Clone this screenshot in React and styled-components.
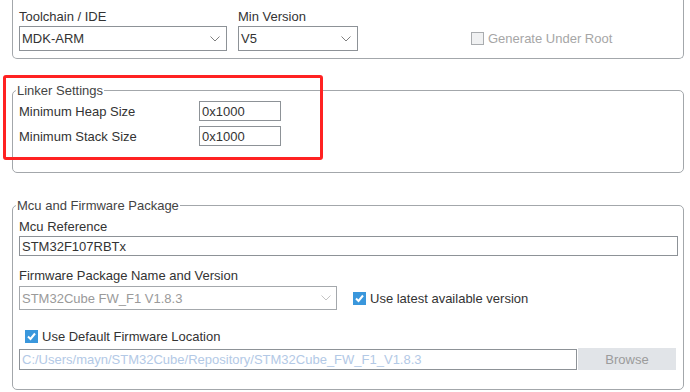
import React from "react";
import styled, { createGlobalStyle } from "styled-components";

const Global = createGlobalStyle`
  html, body { margin: 0; padding: 0; background: #ffffff; }
  body {
    font-family: "Liberation Sans", Arial, sans-serif;
    font-size: 13px;
    color: #333333;
  }
  * { box-sizing: border-box; }
`;

const Page = styled.div`
  width: 690px;
  height: 392px;
  overflow: hidden;
  padding: 0 6px 0 12px;
`;

const TopPanel = styled.div`
  border: 1px solid #a3a7ab;
  border-top: none;
  border-radius: 0 0 5px 5px;
  padding: 9px 6px 7px;
  display: flex;
  align-items: flex-end;
  gap: 11px;
`;

const Field = styled.div`
  display: flex;
  flex-direction: column;
  gap: 2px;
  width: ${(p) => p.$w}px;
`;

const Label = styled.div`
  line-height: 15px;
  color: ${(p) => (p.$muted ? "#a6a6a6" : "#333333")};
  white-space: nowrap;
`;

const Select = styled.div`
  height: ${(p) => p.$h || 25}px;
  width: ${(p) => (p.$w ? `${p.$w}px` : "100%")};
  border: 1px solid ${(p) => (p.$disabled ? "#a4a8ac" : "#8d9297")};
  display: flex;
  align-items: center;
  justify-content: space-between;
  padding: 0 ${(p) => (p.$disabled ? 5 : 6)}px 0 2px;
  color: ${(p) => (p.$disabled ? "#9a9a9a" : "#333333")};
  background: #fff;
  white-space: nowrap;
`;

const CheckItem = styled.label`
  display: flex;
  align-items: center;
  gap: ${(p) => p.$gap ?? 5}px;
  height: ${(p) => p.$h || 15}px;
  margin-left: ${(p) => p.$ml || 0}px;
  color: ${(p) => (p.$muted ? "#a6a6a6" : "#333333")};
  white-space: nowrap;
  line-height: 15px;
`;

const Box = styled.span`
  width: 13px;
  height: 13px;
  flex: none;
  display: inline-flex;
  align-items: center;
  justify-content: center;
  border: 1px solid ${(p) => (p.$checked ? "#3a97dc" : "#a9acaf")};
  background: ${(p) => (p.$checked ? "#3a97dc" : "#f0f1f2")};
`;

const Group = styled.fieldset`
  margin: ${(p) => p.$mt}px 0 0;
  border: 1px solid #a3a7ab;
  border-radius: 5px;
  padding: ${(p) => p.$pad};
  min-width: 0;
  position: relative;
`;

const Legend = styled.legend`
  padding: 0 1px;
  margin-left: -3px;
  line-height: 15px;
  color: #444444;
`;

const LinkerGrid = styled.div`
  display: grid;
  grid-template-columns: 180px 82px;
  grid-auto-rows: 20px;
  row-gap: 5px;
  align-items: center;
`;

const TextInput = styled.div`
  height: ${(p) => p.$h || 20}px;
  width: ${(p) => (p.$w ? `${p.$w}px` : "100%")};
  border: 1px solid #8d9297;
  display: flex;
  align-items: center;
  padding: 0 2px;
  color: ${(p) => (p.$faded ? "#b3c9e6" : "#333333")};
  background: #fff;
  white-space: nowrap;
  overflow: hidden;
`;

const Highlight = styled.div`
  position: absolute;
  left: -10px;
  top: -23px;
  width: 320px;
  height: 85px;
  border: 3px solid #ff2222;
  border-radius: 3px;
  pointer-events: none;
`;

const Column = styled.div`
  display: flex;
  flex-direction: column;
`;

const Row = styled.div`
  display: flex;
  align-items: center;
  gap: ${(p) => p.$gap || 0}px;
  margin-top: ${(p) => p.$mt || 0}px;
`;

const Spacer = styled.div`
  height: ${(p) => p.$h}px;
`;

const BrowseButton = styled.div`
  width: 98px;
  height: 22px;
  margin-left: 1px;
  background: #e1e4e8;
  color: #9b9b9b;
  display: flex;
  align-items: center;
  justify-content: center;
`;

const Chevron = ({ color = "#7f7f7f" }) => (
  <svg width="10" height="6" viewBox="0 0 10 6">
    <polyline points="0.5,0.5 5,5 9.5,0.5" fill="none" stroke={color} strokeWidth="1" />
  </svg>
);

const Check = () => (
  <svg width="11" height="11" viewBox="0 0 11 11">
    <polyline points="2,5.5 4.5,8 9,2.5" fill="none" stroke="#ffffff" strokeWidth="2" />
  </svg>
);

export default function App() {
  return (
    <>
      <Global />
      <Page>
        <TopPanel>
          <Field $w={208}>
            <Label>Toolchain / IDE</Label>
            <Select>
              <span>MDK-ARM</span>
              <Chevron />
            </Select>
          </Field>
          <Field $w={120}>
            <Label>Min Version</Label>
            <Select>
              <span>V5</span>
              <Chevron />
            </Select>
          </Field>
          <CheckItem $muted $h={25} $ml={102} $gap={4}>
            <Box />
            <span>Generate Under Root</span>
          </CheckItem>
        </TopPanel>

        <Group $mt={24} $pad="3px 6px 26px">
          <Legend>Linker Settings</Legend>
          <LinkerGrid>
            <Label>Minimum Heap Size</Label>
            <TextInput>0x1000</TextInput>
            <Label>Minimum Stack Size</Label>
            <TextInput>0x1000</TextInput>
          </LinkerGrid>
          <Highlight />
        </Group>

        <Group $mt={25} $pad="6px 5px 19px 6px">
          <Legend>Mcu and Firmware Package</Legend>
          <Column>
            <Label>Mcu Reference</Label>
            <Spacer $h={2} />
            <TextInput>STM32F107RBTx</TextInput>
            <Spacer $h={12} />
            <Label>Firmware Package Name and Version</Label>
            <Row $mt={3} $gap={16}>
              <Select $w={318} $h={24} $disabled>
                <span>STM32Cube FW_F1 V1.8.3</span>
                <Chevron color="#c4c4c4" />
              </Select>
              <CheckItem $gap={4}>
                <Box $checked>
                  <Check />
                </Box>
                <span>Use latest available version</span>
              </CheckItem>
            </Row>
            <Row $mt={19}>
              <CheckItem $ml={6} $gap={4}>
                <Box $checked>
                  <Check />
                </Box>
                <span>Use Default Firmware Location</span>
              </CheckItem>
            </Row>
            <Row $mt={4}>
              <TextInput $w={558} $h={21} $faded>
                C:/Users/mayn/STM32Cube/Repository/STM32Cube_FW_F1_V1.8.3
              </TextInput>
              <BrowseButton>Browse</BrowseButton>
            </Row>
          </Column>
        </Group>
      </Page>
    </>
  );
}
